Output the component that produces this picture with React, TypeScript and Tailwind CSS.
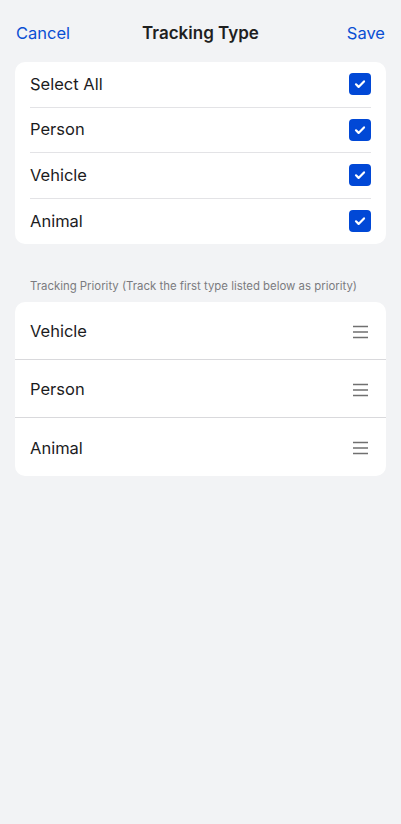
import React from 'react';

const types = ['Select All', 'Person', 'Vehicle', 'Animal'];
const priority = ['Vehicle', 'Person', 'Animal'];

function CheckBox() {
  return (
    <div className="w-[22px] h-[22px] rounded-[4px] bg-[#0148d6] flex items-center justify-center">
      <svg width="14" height="14" viewBox="0 0 14 14" fill="none">
        <path d="M3 7.3l2.6 2.6L11 4.4" stroke="#fff" strokeWidth="2.2" strokeLinecap="round" strokeLinejoin="round" />
      </svg>
    </div>
  );
}

function DragHandle() {
  return (
    <svg width="17" height="14" viewBox="0 0 17 14" fill="none">
      <path d="M1 1.5h15M1 7h15M1 12.5h15" stroke="#707070" strokeWidth="1.6" />
    </svg>
  );
}

export default function App() {
  return (
    <div className="min-h-[824px] bg-[#f2f3f5] font-['Inter','Noto_Sans',sans-serif] text-[#1c1c1e]">
      {/* Header */}
      <div className="h-[62px] pt-[4px] px-4 grid grid-cols-[1fr_auto_1fr] items-center">
        <button className="justify-self-start text-[16.5px] leading-6 text-[#0a4fd3]">Cancel</button>
        <h1 className="text-[17px] leading-6 font-semibold text-[#1f1f1f]">Tracking Type</h1>
        <button className="justify-self-end text-[16.5px] leading-6 text-[#0a4fd3]">Save</button>
      </div>

      {/* Type selection */}
      <div className="mx-[15px] bg-white rounded-[10px] px-[15px]">
        {types.map((t, i) => (
          <div
            key={t}
            className={`h-[45.5px] flex items-center justify-between ${i < types.length - 1 ? 'border-b border-[#e3e3e6]' : ''}`}
          >
            <span className="text-[16.5px]">{t}</span>
            <CheckBox />
          </div>
        ))}
      </div>

      <p className="mt-[34px] mb-2 px-[30px] h-4 leading-4 text-[11.4px] text-[#7b7b7f] whitespace-nowrap">
        Tracking Priority (Track the first type listed below as priority)
      </p>

      {/* Priority list */}
      <div className="mx-[15px] bg-white rounded-[10px] overflow-hidden">
        {priority.map((p, i) => (
          <div
            key={p}
            className={`h-[58px] px-[15px] pt-[2px] flex items-center justify-between ${i < priority.length - 1 ? 'border-b border-[#d9d9dc]' : ''}`}
          >
            <span className="text-[16.5px]">{p}</span>
            <div className="pr-[2px]">
              <DragHandle />
            </div>
          </div>
        ))}
      </div>
    </div>
  );
}
